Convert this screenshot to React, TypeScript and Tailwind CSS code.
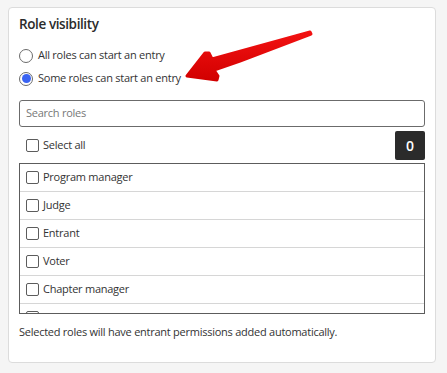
import React, { useState } from "react";

const roles = ["Program manager", "Judge", "Entrant", "Voter", "Chapter manager", "Auditor"];

const Radio: React.FC<{ checked: boolean; label: string; onClick: () => void }> = ({ checked, label, onClick }) => (
  <label className="flex items-center h-[23px] gap-[5px] cursor-pointer" onClick={onClick}>
    <span className="w-[14px] h-[14px] rounded-full border border-[#6b6b6b] bg-white flex items-center justify-center">
      {checked && <span className="w-[9px] h-[9px] rounded-full bg-[#3a63f2]" />}
    </span>
    <span className="text-[11px] tracking-[-0.25px] text-[#333]">{label}</span>
  </label>
);

const Checkbox: React.FC<{ label: string }> = ({ label }) => (
  <label className="flex items-center gap-[4px]">
    <span className="w-[13px] h-[13px] rounded-[2px] border border-[#5c5c5c] bg-white" />
    <span className="text-[11px] tracking-[-0.25px] text-[#333]">{label}</span>
  </label>
);

const App: React.FC = () => {
  const [mode, setMode] = useState<"all" | "some">("some");

  return (
    <div className="relative w-[447px] h-[373px] bg-[#f5f5f5] pt-[7px] pl-[8px] font-['Open_Sans',sans-serif]">
      <div className="w-[428px] bg-white border border-[#dcdcdc] rounded-[4px] px-[10px] pt-[6px] pb-[22px]">
        <p className="text-[13.5px] leading-[20px] font-semibold tracking-[-0.4px] text-[#2b2b2b]">Role visibility</p>

        <div className="flex flex-col mt-[10px]">
          <Radio checked={mode === "all"} label="All roles can start an entry" onClick={() => setMode("all")} />
          <Radio checked={mode === "some"} label="Some roles can start an entry" onClick={() => setMode("some")} />
        </div>

        <div className="mt-[10px] h-[27px] border border-[#6b6b6b] rounded-[3px] flex items-center px-[6px]">
          <span className="text-[11px] tracking-[-0.25px] text-[#777]">Search roles</span>
        </div>

        <div className="mt-[4px] h-[29px] flex items-center justify-between pl-[7px]">
          <Checkbox label="Select all" />
          <div className="w-[30px] h-[29px] bg-[#2b2b2b] rounded-[2px] flex items-center justify-center text-white text-[14px] font-semibold">0</div>
        </div>

        <div className="mt-[3px] h-[151px] border border-[#5c5c5c] overflow-hidden">
          {roles.map(role => (
            <div key={role} className="h-[28px] shrink-0 border-b border-[#d6d6d6] flex items-center pl-[6px]">
              <Checkbox label={role} />
            </div>
          ))}
        </div>

        <p className="mt-[10px] text-[11px] leading-[16px] tracking-[-0.25px] text-[#333]">Selected roles will have entrant permissions added automatically.</p>
      </div>

      <svg className="absolute left-0 top-0 pointer-events-none" width="447" height="373" viewBox="0 0 447 373">
        <defs>
          <linearGradient id="arrowFill" x1="0" y1="0" x2="0" y2="1">
            <stop offset="0" stopColor="#f21212" />
            <stop offset="1" stopColor="#d20000" />
          </linearGradient>
        </defs>
        <polygon
          points="187,76 205,53 209,53 212,59 310,32 311,34 240,61 214,70 218,76 217,80"
          fill="url(#arrowFill)"
          stroke="url(#arrowFill)"
          strokeWidth="3"
          strokeLinejoin="round"
        />
      </svg>
    </div>
  );
};

export default App;
